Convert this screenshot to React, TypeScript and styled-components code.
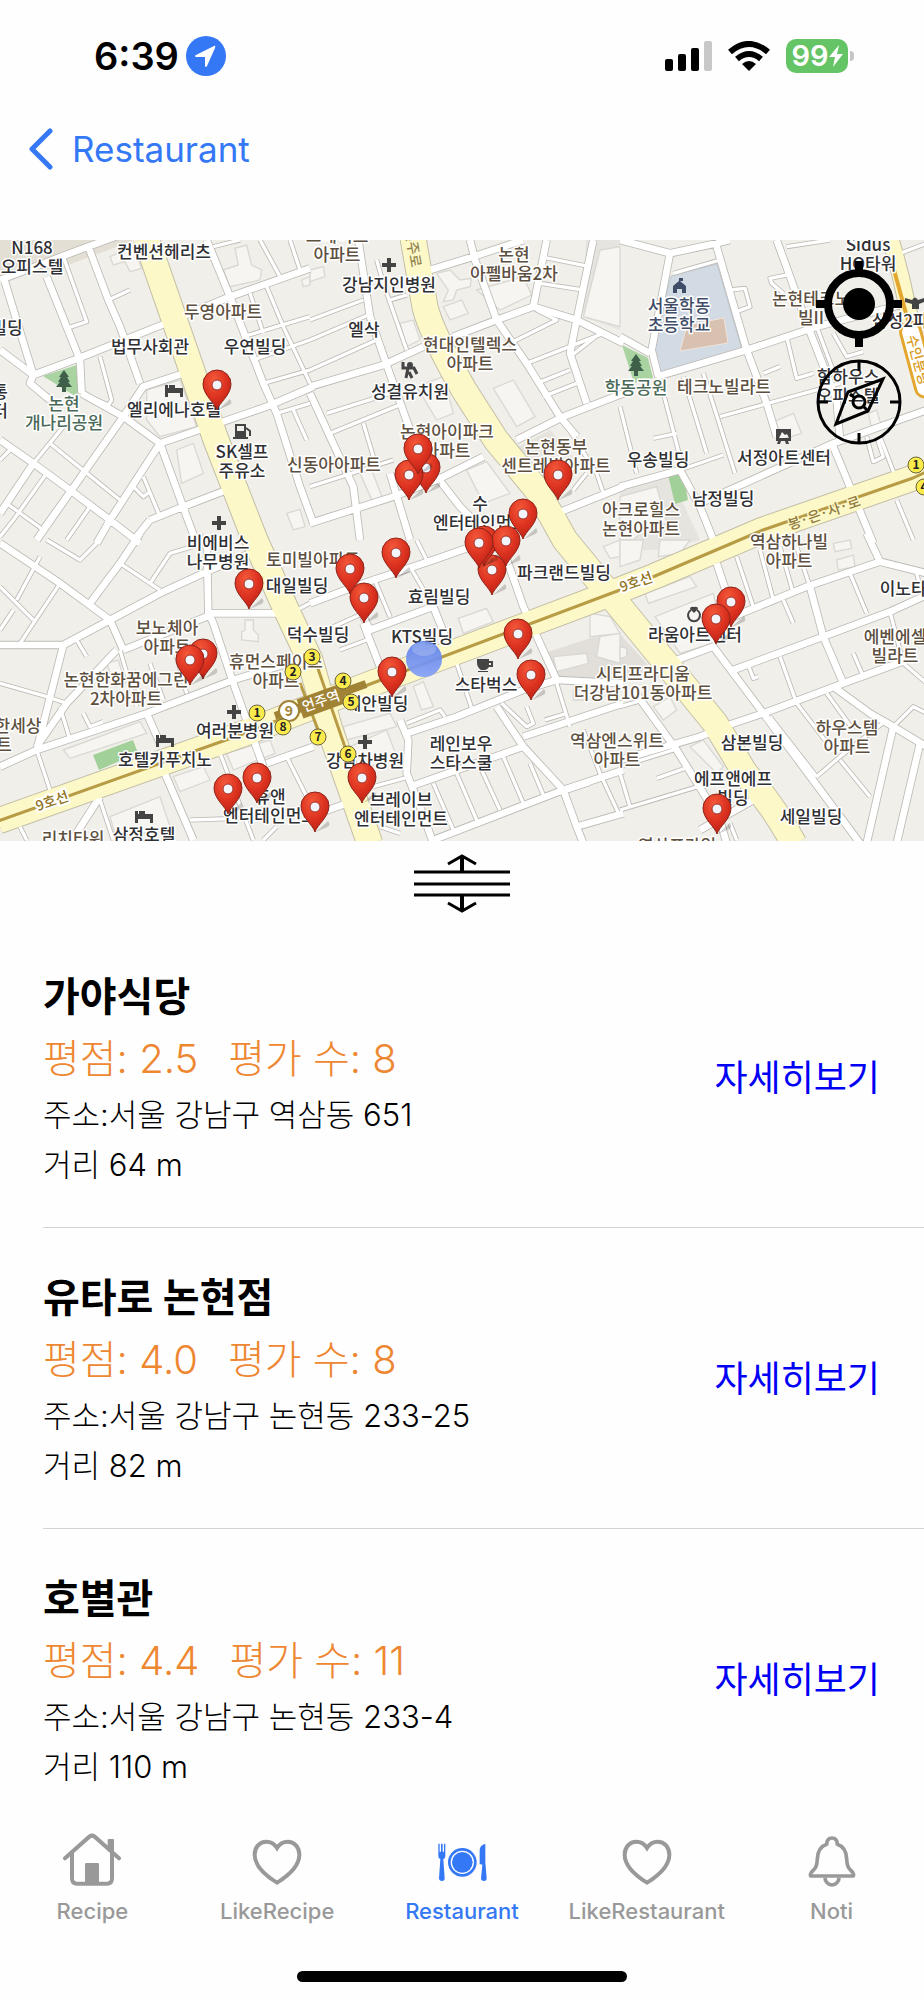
import React from "react";
import styled, { createGlobalStyle } from "styled-components";

const BLUE = "#3478f6";
const GREY = "#999999";

const GlobalStyle = createGlobalStyle`
  *, *::before, *::after { box-sizing: border-box; }
  body {
    margin: 0;
    background: #fefefe;
    color: #000;
    font-family: Inter, "Noto Sans CJK KR", sans-serif;
  }
  button { font: inherit; color: inherit; background: none; border: 0; padding: 0; cursor: pointer; }
  svg { display: block; }
`;

const Screen = styled.div`
  display: flex;
  flex-direction: column;
  min-height: 100vh;
`;

const StatusBar = styled.div`
  display: flex;
  align-items: center;
  justify-content: space-between;
  height: 112px;
  padding: 0 70px 0 94px;
`;

const StatusGroup = styled.div<{ $gap: number }>`
  display: flex;
  align-items: center;
  gap: ${(p) => p.$gap}px;
`;

const Clock = styled.time`
  font-size: 38px;
  font-weight: 600;
  line-height: 40px;
`;

const Battery = styled.div`
  display: flex;
  align-items: center;
  gap: 2px;
`;

const BatteryBody = styled.div`
  display: flex;
  align-items: center;
  justify-content: center;
  width: 62px;
  height: 34px;
  border-radius: 10px;
  background: #65c466;
  color: #fff;
  font-size: 29px;
  font-weight: 600;
  line-height: 34px;
`;

const BatteryNub = styled.div`
  width: 4px;
  height: 10px;
  border-radius: 0 4px 4px 0;
  background: #c4c4c4;
`;

const NavBar = styled.header`
  display: flex;
  align-items: flex-start;
  height: 128px;
  padding: 15px 28px;
`;

const BackButton = styled.button`
  display: flex;
  align-items: center;
  gap: 18px;
  height: 44px;
  color: ${BLUE};
  font-size: 35px;
  line-height: 44px;
`;

const MapPanel = styled.section`
  position: relative;
  overflow: hidden;
`;

const MapSvg = styled.svg`
  width: 100%;
  height: auto;
  font-family: "Noto Sans CJK KR", sans-serif;
`;

const MapControls = styled.div`
  position: absolute;
  top: 21px;
  right: 22px;
  display: flex;
  flex-direction: column;
  gap: 12px;
`;

const DragHandle = styled.button`
  display: flex;
  justify-content: center;
  align-items: center;
  width: 100%;
  height: 86px;
`;

const List = styled.ul`
  flex: 1;
  margin: 0;
  padding: 0 0 0 43px;
  list-style: none;
`;

const Row = styled.li`
  display: flex;
  align-items: center;
  justify-content: space-between;
  padding: 39px 44px 37px 0;
  & + & { border-top: 1px solid #d4d4d6; }
`;

const Title = styled.h2`
  margin: 0;
  font-size: 40px;
  font-weight: 700;
  line-height: 62px;
`;

const Rating = styled.p`
  display: flex;
  gap: 30px;
  margin: 0;
  color: #ee8732;
  font-size: 40px;
  font-weight: 300;
  line-height: 62px;
`;

const Detail = styled.p`
  margin: 0;
  font-size: 31px;
  font-weight: 300;
  line-height: 50px;
`;

const MoreLink = styled.a`
  color: #0000f5;
  font-size: 36px;
  line-height: 48px;
  text-decoration: none;
`;

const TabBar = styled.nav`
  display: grid;
  grid-template-columns: repeat(5, 1fr);
  height: 142px;
`;

const Tab = styled.a<{ $active?: boolean }>`
  display: flex;
  flex-direction: column;
  align-items: center;
  gap: 7px;
  color: ${(p) => (p.$active ? BLUE : GREY)};
  font-size: 22px;
  font-weight: 500;
  line-height: 30px;
  text-decoration: none;
`;

const HomeArea = styled.div`
  display: flex;
  justify-content: center;
  height: 29px;
`;

const HomeIndicator = styled.div`
  width: 330px;
  height: 11px;
  border-radius: 6px;
  background: #000;
`;

/* ---- map data ---- */

/* Streets are kept per tile; inside a tile three units make one map unit. */
type Tile = { x: number; y: number; wide: string; narrow: string; blocks: string };

const tiles: Tile[] = [
  {
    x: 0,
    y: 0,
    wide:
      "M0 120L210 40L400-30M10 110L100 405M140 110L240 360L245 460M265 20L325 180L360 260L420 430M100 405L235 355L485 255L690 170L930 85M620 0L690 170L790 430L830 520L900 740L940 850M0 330L100 405L90 430L150 480M245 460L370 530L480 610M550 400L430 440L370 530L250 700L110 900M480 610L800 500L940 440M480 610L330 840L290 910M480 610L560 830L590 910M0 600L100 670L210 750L330 840L420 910M100 670L0 820M450 840L550 800L680 750M450 840L410 890",
    narrow:
      "M190 50L260 245L200 265M325 180L390 150M640 20L720 0M750 160L790 280M780 0L840 110M870 0L900 90M800 140L850 260L930 430M730 290L930 230M760 360L930 300M790 430L930 390M300 350L335 480L325 495L270 470M190 560L100 670M150 610L360 780M140 700L40 840L0 890M30 630L0 660M210 750L130 860M270 800L200 900M20 790L130 870M430 710L480 830M400 740L430 770L450 755M830 520L930 490M880 510L920 600",
    blocks:
      "M330 50L400 20L425 85L390 95L375 65L340 75ZM670 90L715 75L705 25L740 15L755 75L785 90L780 120L690 140ZM440 450L540 420L590 560L480 590L440 540ZM530 630L580 610L610 700L545 730ZM860 820L900 808L915 860L880 870ZM905 120L930 110V135L910 140Z",
  },
  {
    x: 930,
    y: 0,
    wide:
      "M145 0L180 230L230 375L300 570M0 440L220 375L340 320M0 460L60 590L130 740L150 900M0 850L250 770L380 720L520 650M240 700L300 900M360 90L490 50L640 0M480 0L495 60L560 240L650 370L750 530L800 590M430 290L560 240L670 200L800 240L940 310M710 0L670 200M850 0L800 240L780 340L830 490M620 600L760 530L940 460M740 820L940 740M380 710L450 800L510 860",
    narrow:
      "M200 60L220 130L290 330M0 240L160 180M0 300L175 225M0 390L200 300M50 520L240 460M60 580L280 490M160 550L190 650M0 740L250 660M240 180L290 165M690 50L840 80M690 130L820 150M680 210L740 240L600 310M650 370L880 280M680 430L780 390M700 470L800 430M870 280L780 350M760 540L860 700L880 760M790 750L830 700",
    blocks:
      "M380 100L420 90L450 120L485 115L480 140L440 150L430 180L400 185L415 150ZM400 200L455 180L475 220L420 240ZM270 250L310 240L330 300L290 320ZM500 150L640 110L665 165L570 210ZM550 445L610 420L675 530L620 560ZM320 440L400 410L430 520L380 540ZM470 690L530 665L600 760L520 790ZM150 700L185 690L220 780L190 790ZM870 30L930 20V260L820 230L840 150ZM0 90L40 80L45 110L0 125Z",
  },
  {
    x: 1860,
    y: 0,
    wide:
      "M0 0L150 40L290 10L330 0M150 40L95 330L115 410M290 20L380 330L440 490L470 590M110 410L380 330L590 260L860 190M0 740L180 690M180 690L240 800L280 900M240 790L640 610L920 510M640 620L760 910M470 0L510 110L560 250L650 480L660 600M0 290L90 340",
    narrow:
      "M160 100L300 60M180 690L310 645M500 20L630 0M490 160L455 130L450 115L500 105M330 150L375 145L390 200L350 215M300 530L660 430M430 400L480 380M500 290L530 415L580 400M190 410L260 640M250 400L345 700M120 420L190 690M170 580L100 595M0 500L50 700M740 590L760 665L790 650L770 590M590 260L650 420M640 280L680 350L730 335M720 820L760 900M830 780L880 900M840 40L920 10M780 590L830 720",
    blocks:
      "M450 550L520 520L545 580L480 600ZM0 770L110 740L140 850L70 870L40 900H0ZM200 120L280 90L285 110L200 140ZM745 520L770 510L785 560L755 565Z",
  },
  {
    x: 0,
    y: 900,
    wide:
      "M0 10L180 130L330 240L370 330M270 190L360 70L420-20M0 315L190 315L330 240L480 160L620 95L750 40M620-20L625 220L640 250L700 430L790 680M625 220L830 220M190 315L110 630M370 330L620 230M350 330L200 490L110 620M0 680L110 630L440 520L700 420L930 350M490 690L580 900M300 770L210 910M800 670L940 620M440 520L480 610",
    narrow:
      "M180 130L60 310M120 50L50 180M0 140L100 240M140 0L240 60L300 0M40 210L0 270M850 230L930 190M360 70L480 150M450 130L510 40L610 10M230 300L260 350M0 430L140 470L200 490M110 630L150 750M400 390L420 470M360 330L410 500M450 370L490 480M530 350L560 460M180 500L210 600M250 520L270 560L310 545M660 640L760 900M860 650L930 790M60 860L80 900M300 780L340 900M570 840L720 835M830 860L790 900",
    blocks:
      "M190 630L420 545L440 580L210 655ZM735 240H760V270L775 285V305L725 300V275L735 270ZM330 830L480 770L510 860L350 900ZM520 710L610 680L630 720L540 755ZM680 640L810 600L825 640L700 690ZM320 370L355 360L375 430L345 440Z",
  },
  {
    x: 930,
    y: 900,
    wide:
      "M0 190L160 130L370 60L570-10M160 230L180 270L370 200L410 300M160 250L210 380M570 0L640 200L740 420L940 430M290 580L440 530L640 450L740 420M270 540L295 600L290 700L330 800L370 910M560 500L640 620L760 750L800 860L820 910M640 590L940 490M300 740L640 620M370 900L760 750L940 690M800 860L940 820M0 830L110 790",
    narrow:
      "M190 110L240 230M70 260L160 220M90 330L170 300M300 80L370 200M320 0L350 60M440 370L490 520M290 550L390 510L405 530M575 490L650 560L670 550L650 500M705 540L770 520M740 430L780 560M190 740L300 710M370 730L430 870M440 700L500 840M510 680L570 810M580 650L640 790M660 670L700 765M820 570L870 700L930 830M750 760L840 730M210 860L270 880",
    blocks:
      "M445 235L530 205L550 245L460 280ZM730 350L830 340L835 370L740 395ZM870 290L930 280V370L860 350ZM840 220L900 230L930 280L840 290ZM310 440L340 425L370 500L335 510ZM100 560L240 520L260 560L110 600ZM120 620L230 570L260 650L150 690ZM880 20L930 0V50L900 55ZM790 450H830V480H790Z",
  },
  {
    x: 1860,
    y: 900,
    wide:
      "M170 360L280 320L430 520L720 910M340 230L560 140L780 65L920 100M290 70L320 160M740-20L780 65M570 140L610 290L670 430M340 390L610 290L810 215L920 165M240 590L340 550L430 520L670 430L860 360M640 440L750 520L820 560L920 620M820 560L740 910M900 610L830 910M40 450L170 630L300 840L320 910M0 660L240 590M240 870L400 780",
    narrow:
      "M350 50L400 200M420 30L460 180M480 20L520 160M530 20L570 140M690 100L740 220M490 180L520 250M810 215L850 370L920 430M480 350L530 490M700 340L730 410M385 375L400 415L415 410M530 490L630 620M450 530L590 710M620 460L700 570M590 710L660 650L800 540M660 660L750 770M820 560L880 500L920 520M0 500L70 480M0 810L300 720M110 715L195 685M160 630L0 680M330 850L350 900M0 700L30 800M890 100L900 140",
    blocks:
      "M75 160L210 110L230 140L85 190ZM105 230L280 160L310 300L180 340ZM650 60L700 45L705 80L655 90ZM640 10L690 0L695 25L645 35ZM0 0H70L60 60L0 80ZM120 0H210L180 40L115 50ZM210 620L250 600L310 680L290 700ZM100 500L150 470L170 510L130 540ZM0 320L20 325V350L0 355Z",
  },
];

const DARK = "#2f3033";
const BROWN = "#5d5040";
const GREEN = "#4a6a58";
const SLATE = "#3f4d68";

type Place = { x: number; y: number; lines: string[]; color?: string };

const places: Place[] = [
  { x: 32, y: 8, lines: ["N168", "오피스텔"] },
  { x: 164, y: 12, lines: ["컨벤션헤리츠"] },
  { x: 223, y: 72, lines: ["두영아파트"], color: BROWN },
  { x: 150, y: 107, lines: ["법무사회관"] },
  { x: 255, y: 107, lines: ["우연빌딩"] },
  { x: 7, y: 88, lines: ["빌딩"] },
  { x: 0, y: 152, lines: ["통", "터"] },
  { x: 64, y: 164, lines: ["논현", "개나리공원"], color: GREEN },
  { x: 174, y: 170, lines: ["엘리에나호텔"] },
  { x: 242, y: 212, lines: ["SK셀프", "주유소"] },
  { x: 334, y: 225, lines: ["신동아아파트"], color: BROWN },
  { x: 218, y: 303, lines: ["비에비스", "나무병원"] },
  { x: 337, y: -4, lines: ["크레이트", "아파트"], color: BROWN },
  { x: 389, y: 45, lines: ["강남지인병원"] },
  { x: 364, y: 90, lines: ["엘삭"] },
  { x: 514, y: 15, lines: ["논현", "아펠바움2차"], color: BROWN },
  { x: 470, y: 105, lines: ["현대인텔렉스", "아파트"], color: BROWN },
  { x: 410, y: 152, lines: ["성결유치원"] },
  { x: 447, y: 192, lines: ["논현아이파크", "아파트"], color: BROWN },
  { x: 556, y: 207, lines: ["논현동부", "센트레빌아파트"], color: BROWN },
  { x: 480, y: 264, lines: ["수", "엔터테인먼트"] },
  { x: 641, y: 270, lines: ["아크로힐스", "논현아파트"], color: BROWN },
  { x: 636, y: 148, lines: ["학동공원"], color: GREEN },
  { x: 868, y: 5, lines: ["Sidus", "HQ타워"] },
  { x: 811, y: 59, lines: ["논현테크노", "빌II"], color: BROWN },
  { x: 908, y: 81, lines: ["삼성2파크"] },
  { x: 679, y: 66, lines: ["서울학동", "초등학교"], color: SLATE },
  { x: 724, y: 147, lines: ["테크노빌라트"], color: BROWN },
  { x: 848, y: 137, lines: ["함하우스", "오피스텔"] },
  { x: 658, y: 220, lines: ["우송빌딩"] },
  { x: 784, y: 218, lines: ["서정아트센터"] },
  { x: 723, y: 259, lines: ["남정빌딩"] },
  { x: 789, y: 302, lines: ["역삼하나빌", "아파트"], color: BROWN },
  { x: 313, y: 320, lines: ["토미빌아파트"], color: BROWN },
  { x: 297, y: 346, lines: ["대일빌딩"] },
  { x: 167, y: 388, lines: ["보노체아", "아파트"], color: BROWN },
  { x: 126, y: 440, lines: ["논현한화꿈에그린", "2차아파트"], color: BROWN },
  { x: 276, y: 422, lines: ["휴먼스페이스", "아파트"], color: BROWN },
  { x: 318, y: 395, lines: ["덕수빌딩"] },
  { x: 18, y: 486, lines: ["한세상"], color: BROWN },
  { x: 4, y: 505, lines: ["트"], color: BROWN },
  { x: 235, y: 491, lines: ["여러분병원"] },
  { x: 165, y: 520, lines: ["호텔카푸치노"] },
  { x: 73, y: 599, lines: ["리치타워"], color: BROWN },
  { x: 144, y: 595, lines: ["삼정호텔"] },
  { x: 270, y: 557, lines: ["휴앤", "엔터테인먼트"] },
  { x: 439, y: 357, lines: ["효림빌딩"] },
  { x: 422, y: 397, lines: ["KTS빌딩"] },
  { x: 486, y: 445, lines: ["스타벅스"] },
  { x: 564, y: 333, lines: ["파크랜드빌딩"] },
  { x: 377, y: 464, lines: ["제안빌딩"] },
  { x: 643, y: 434, lines: ["시티프라디움", "더강남101동아파트"], color: BROWN },
  { x: 617, y: 501, lines: ["역삼엔스위트", "아파트"], color: BROWN },
  { x: 461, y: 504, lines: ["레인보우", "스타스쿨"] },
  { x: 365, y: 521, lines: ["강남차병원"] },
  { x: 401, y: 560, lines: ["브레이브", "엔터테인먼트"] },
  { x: 695, y: 395, lines: ["라움아트센터"] },
  { x: 911, y: 349, lines: ["이노타워"] },
  { x: 895, y: 397, lines: ["에벤에셀", "빌라트"], color: BROWN },
  { x: 847, y: 488, lines: ["하우스템", "아파트"], color: BROWN },
  { x: 752, y: 503, lines: ["삼본빌딩"] },
  { x: 733, y: 539, lines: ["에프앤에프", "빌딩"] },
  { x: 811, y: 577, lines: ["세일빌딩"] },
  { x: 677, y: 606, lines: ["역삼프라임"], color: BROWN },
];

const exits: [number, number, string][] = [
  [257, 473, "1"],
  [283, 487, "8"],
  [293, 432, "2"],
  [312, 417, "3"],
  [343, 441, "4"],
  [351, 462, "5"],
  [318, 497, "7"],
  [348, 514, "6"],
  [916, 225, "1"],
  [924, 247, "4"],
];

const pins: [number, number][] = [
  [217, 144],
  [426, 227],
  [409, 234],
  [418, 208],
  [558, 234],
  [523, 273],
  [492, 329],
  [484, 300],
  [506, 300],
  [479, 302],
  [396, 312],
  [350, 328],
  [364, 357],
  [518, 393],
  [531, 434],
  [392, 431],
  [362, 537],
  [315, 566],
  [249, 343],
  [203, 413],
  [190, 419],
  [228, 548],
  [257, 537],
  [731, 361],
  [716, 378],
  [717, 568],
];

const TILE_SCALE = 1 / 3;
const tileTransform = (t: Tile) => `scale(${TILE_SCALE}) translate(${t.x} ${t.y})`;

const EONJU = "M146-2L216 200L255 300L285 367L310 420L330 490L370 604";
const NONHYEON =
  "M413-2L425 67Q431 92 464 150L496 200L537 250L565 300L620 367L715 483L745 533Q775 568 794 604";
const BONGEUNSA = "M-2 581L240 495L365 446L620 350L655 336L763 290L913 238L926 232";
const SUIN = "M890-2Q900 30 906 60L926 150";

const Plus = ({ x, y }: { x: number; y: number }) => (
  <path d={`M${x - 7} ${y}h14M${x} ${y - 7}v14`} stroke="#444" strokeWidth="4" />
);
const Bed = ({ x, y }: { x: number; y: number }) => (
  <path
    transform={`translate(${x} ${y})`}
    d="M-9-6h3v3h15v9h-3v-4h-12v4h-3zM-5-6h6v3h-6z"
    fill="#444"
  />
);
const Tree = ({ x, y }: { x: number; y: number }) => (
  <path
    transform={`translate(${x} ${y})`}
    d="M0-11L5-4H3L6 1H4L8 6H2V11H-2V6H-8L-4 1H-6L-3-4H-5Z"
    fill="#3f5f4b"
  />
);

const MapView = () => (
  <MapSvg viewBox="0 0 924 601" role="img" aria-label="지도">
    <defs>
      <radialGradient id="pinFill" cx="0.4" cy="0.25" r="0.8">
        <stop offset="0" stopColor="#f4593a" />
        <stop offset="0.55" stopColor="#dc3220" />
        <stop offset="1" stopColor="#b81f14" />
      </radialGradient>
      <linearGradient id="dotFill" x1="0" y1="0" x2="0" y2="1">
        <stop offset="0" stopColor="#5b7fe8" />
        <stop offset="1" stopColor="#84a0fa" />
      </linearGradient>
      <g id="pin">
        <path d="M1 25L13 14Q17 19 10 21Z" fill="#000" opacity="0.18" />
        <path
          d="M0 25C-2 18-14 10-14-1A14 14 0 0 1 14-1C14 10 2 18 0 25Z"
          fill="url(#pinFill)"
          stroke="#8c2419"
          strokeWidth="1"
        />
        <circle r="5" fill="#f3f5fa" stroke="#a03028" strokeWidth="1" />
      </g>
    </defs>

    <rect width="924" height="601" fill="#f1efea" />
    <path d="M0 0H135L60 28L0 36Z" fill="#e3dfd5" />
    <path d="M586 0H620V90L583 77Z" fill="#e6e4e0" />
    <path d="M620 250L670 235L700 300L660 310H620Z" fill="#e6e4df" />
    <path d="M548 412L600 395L618 392L660 438H556Z" fill="#e2dfda" />
    <path d="M512 210L550 190L580 225L560 255Z" fill="#e6e3dd" />

    {tiles.map((t) => (
      <path key={`${t.x}-${t.y}`} transform={tileTransform(t)} d={t.blocks} fill="#f6f5f2" stroke="#dad8d2" strokeWidth="4" />
    ))}

    <path d="M671 36L717 24L742 110L663 136L652 112Z" fill="#d2dae4" stroke="#c0c9d4" />
    <path d="M687 85L724 78L728 103L680 111Z" fill="#d8c1b0" stroke="#f0e4da" />
    <path d="M43 136L77 125L82 153L75 156Z" fill="#a9d3a1" />
    <path d="M622 105L648 118L653 138L634 143Z" fill="#a9d3a1" />
    <path d="M668 235L683 233L688 260L675 264Z" fill="#a1d198" />
    <path d="M93 515L133 500L138 513L99 530Z" fill="#a1d198" />

    <g fill="none" strokeLinejoin="round">
      {tiles.map((t) => (
        <g key={`${t.x}-${t.y}`} transform={tileTransform(t)} stroke="#bdbab5">
          <path d={t.narrow} strokeWidth="15" />
          <path d={t.wide} strokeWidth="25" />
        </g>
      ))}
      <g stroke="#c3bfa8" strokeWidth="27">
        <path d={EONJU} />
        <path d={NONHYEON} />
        <path d={BONGEUNSA} />
        <path d={SUIN} strokeWidth="18" />
      </g>
      {tiles.map((t) => (
        <g key={`${t.x}-${t.y}`} transform={tileTransform(t)} stroke="#fff">
          <path d={t.narrow} strokeWidth="10" />
          <path d={t.wide} strokeWidth="20" />
        </g>
      ))}
      <g stroke="#fdf8c8" strokeWidth="25">
        <path d={EONJU} />
        <path d={NONHYEON} />
        <path d={BONGEUNSA} />
        <path d={SUIN} strokeWidth="16" />
      </g>
      <path d={BONGEUNSA} stroke="#b79b45" strokeWidth="3" />
      <path d="M894 30L912 95" stroke="#e3a72f" strokeWidth="4" />
      <path d="M300 443L322 500M315 420L346 510" stroke="#b79b45" strokeWidth="3" />
      <path d="M275 476L366 444" stroke="#a08335" strokeWidth="8" />
      <path d="M300 469L344 453" stroke="#a08335" strokeWidth="20" />
    </g>

    <g fontWeight="500">
      <rect x="-30" y="-10" width="76" height="20" rx="9" transform="translate(916 112) rotate(75)" fill="#fff" stroke="#e3a72f" strokeWidth="3" />
      <g textAnchor="middle" fontSize="14">
        <text transform="translate(918 120) rotate(75)" y="5" fill="#d99a20">수인분당</text>
        <text transform="translate(824 273) rotate(-19)" y="5" fill="#8f7a40" stroke="#fdf8c8" strokeWidth="3" paintOrder="stroke">봉·은·사·로</text>
        <text transform="translate(52 561) rotate(-19)" y="5" fill="#8f7220" stroke="#fff" strokeWidth="4" paintOrder="stroke">9호선</text>
        <text transform="translate(636 342) rotate(-19)" y="5" fill="#8f7220" stroke="#fff" strokeWidth="4" paintOrder="stroke">9호선</text>
        <text transform="translate(413 8) rotate(80)" y="5" fill="#8f8450">언주로</text>
        <text transform="translate(321 461) rotate(-19)" y="5" fill="#fff">언주역</text>
      </g>
    </g>

    <circle cx="289" cy="471" r="10" fill="#fff" stroke="#a08335" strokeWidth="2" />
    <text x="289" y="476" fontSize="14" fontWeight="700" textAnchor="middle" fill="#a08335">9</text>

    <Tree x={64} y={141} />
    <Tree x={636} y={125} />
    <Bed x={174} y={151} />
    <Bed x={165} y={501} />
    <Bed x={144} y={577} />
    <Plus x={219} y={283} />
    <Plus x={389} y={25} />
    <Plus x={234} y={472} />
    <Plus x={365} y={502} />
    <g fill="#444">
      <path d="M235 184h11v13h2v2h-15v-2h2zM237 186v5h7v-5z" fillRule="evenodd" />
      <path d="M246 188l4 3v5" fill="none" stroke="#444" strokeWidth="2" />
      <circle cx="410" cy="125" r="3" />
      <path d="M403 122v6h5l-2 10M408 128h6l3 6M409 132l3 6" fill="none" stroke="#444" strokeWidth="3" />
      <path d="M776 189h15v12h-3l1 3h-3l-1-3h-4l-1 3h-3l1-3h-2zM779 198h10l-2-4-2 1-3-3z" fillRule="evenodd" />
      <path d="M477 419h12v2h4v6h-4q-2 3-4 3h-4q-4-3-4-7zM489 423v2h2v-2zM478 431h10v1h-10z" />
      <path d="M691 370a6 6 0 1 0 6 0" fill="none" stroke="#444" strokeWidth="2" />
      <path d="M694 373l-4-4q0-3 4-2q4-1 4 2z" />
      <path d="M905 58l7 2q3-5 6 0l6-2v4l-5 2v5h-7v-5l-7-2z" />
    </g>
    <path d="M673 53V46L679 41V38h4v3h-3l6 5v7h-4v-4h-5v4z" fill={SLATE} />

    <g fontSize="17" fontWeight="500" textAnchor="middle" stroke="#fff" strokeWidth="3" strokeLinejoin="round" paintOrder="stroke">
      {places.map((p) =>
        p.lines.map((line, i) => (
          <text key={`${p.x}-${p.y}-${i}`} x={p.x} y={p.y + 6 + i * 19} fill={p.color ?? DARK}>
            {line}
          </text>
        ))
      )}
    </g>

    {exits.map(([x, y, n]) => (
      <g key={`${x}-${y}`}>
        <circle cx={x} cy={y} r="8" fill="#fbea4c" stroke="#6b6440" strokeWidth="1" />
        <text x={x} y={y + 4} fontSize="12" fontWeight="700" textAnchor="middle" fill="#222">
          {n}
        </text>
      </g>
    ))}

    {pins.map(([x, y]) => (
      <use key={`${x}-${y}`} href="#pin" x={x} y={y + 1} />
    ))}

    <circle cx="424" cy="419" r="18" fill="url(#dotFill)" opacity="0.92" />
    <ellipse cx="424" cy="409" rx="12" ry="7" fill="#fff" opacity="0.2" />
  </MapSvg>
);

/* ---- icons ---- */

const LocateIcon = () => (
  <svg width="86" height="86" viewBox="0 0 86 86" aria-hidden="true">
    <circle cx="43" cy="43" r="31" fill="none" stroke="#000" strokeWidth="8" />
    <circle cx="43" cy="43" r="16" />
    <path d="M43 0V12M43 74V86M0 43H12M74 43H86" stroke="#000" strokeWidth="8" />
  </svg>
);

const CompassIcon = () => (
  <svg width="86" height="86" viewBox="0 0 86 86" fill="none" stroke="#000" strokeWidth="3" aria-hidden="true">
    <circle cx="43" cy="43" r="41" />
    <path d="M43 2V12M43 74V84M2 43H12M74 43H84" />
    <path d="M67 20L32 33L20 65L52 52Z" />
    <circle cx="43" cy="43" r="6" />
    <path d="M34 35L39 39M47 47L52 52" />
  </svg>
);

const HomeIcon = () => (
  <svg width="64" height="60" viewBox="0 0 192 180" fill="none" stroke="currentColor" strokeWidth="12" strokeLinecap="round" aria-hidden="true">
    <path d="M15 88L88 23Q96 17 104 23L177 88" />
    <path d="M36 72V148Q36 164 50 164H142Q156 164 156 148V72" />
    <path d="M143 60V33Q143 30 147 30H159Q162 30 162 33V78ZM75 106Q75 102 79 102H113Q117 102 117 106V162H75Z" fill="currentColor" stroke="none" />
  </svg>
);

const HeartIcon = () => (
  <svg width="64" height="60" viewBox="0 0 192 180" fill="none" stroke="currentColor" strokeWidth="12" aria-hidden="true">
    <path d="M96 57C88 44 78 38 64 38C44 38 29 54 29 77C29 106 56 136 96 161C136 136 163 106 163 77C163 54 148 38 128 38C114 38 104 44 96 57Z" />
  </svg>
);

const DiningIcon = () => (
  <svg width="64" height="60" viewBox="0 0 192 180" fill="currentColor" aria-hidden="true">
    <circle cx="97" cy="100" r="31" />
    <circle cx="97" cy="100" r="39" fill="none" stroke="currentColor" strokeWidth="8" />
    <path d="M25 44H29V68H33V44H38V68H42V44H46V82Q46 88 40 91L44 148Q44 156 36 156Q27 156 27 148L31 91Q25 88 25 82Z" />
    <path d="M149 105V62Q150 48 166 44V100L170 148Q170 156 162 156Q153 156 153 148L157 107Z" />
  </svg>
);

const BellIcon = () => (
  <svg width="64" height="60" viewBox="0 0 192 180" fill="none" stroke="currentColor" strokeWidth="11" strokeLinejoin="round" aria-hidden="true">
    <path d="M80 46Q81 27 96 27Q111 27 112 46C130 52 139 66 140 90C141 114 146 118 158 130Q164 141 157 141H35Q28 141 34 130C46 118 51 114 52 90C53 66 62 52 80 46Z" />
    <path d="M75 146A21 22 0 0 0 117 146" />
  </svg>
);

const restaurants = [
  { name: "가야식당", score: "2.5", reviews: 8, address: "서울 강남구 역삼동 651", distance: 64 },
  { name: "유타로 논현점", score: "4.0", reviews: 8, address: "서울 강남구 논현동 233-25", distance: 82 },
  { name: "호별관", score: "4.4", reviews: 11, address: "서울 강남구 논현동 233-4", distance: 110 },
];

const tabs = [
  { label: "Recipe", Icon: HomeIcon },
  { label: "LikeRecipe", Icon: HeartIcon },
  { label: "Restaurant", Icon: DiningIcon, active: true },
  { label: "LikeRestaurant", Icon: HeartIcon },
  { label: "Noti", Icon: BellIcon },
];

export default function App() {
  return (
    <>
      <GlobalStyle />
      <Screen>
        <StatusBar>
          <StatusGroup $gap={7}>
            <Clock>6:39</Clock>
            <svg width="40" height="40" viewBox="0 0 40 40" aria-hidden="true">
              <circle cx="20" cy="20" r="20" fill={BLUE} />
              <path d="M29 12L21 30Q20 32 19 30V21H10Q8 20 10 19L28 10Q30 9 29 12Z" fill="#fff" />
            </svg>
          </StatusGroup>
          <StatusGroup $gap={16}>
            <svg width="47" height="30" viewBox="0 0 47 30" aria-hidden="true">
              <rect x="0" y="18" width="8" height="12" rx="2" />
              <rect x="13" y="13" width="8" height="17" rx="2" />
              <rect x="26" y="7" width="8" height="23" rx="2" />
              <rect x="39" y="0" width="8" height="30" rx="2" fill="#c8c8c8" />
            </svg>
            <svg width="42" height="30" viewBox="0 0 42 30" fill="none" stroke="#000" aria-hidden="true">
              <path d="M2 11Q21-5 40 11" strokeWidth="6" />
              <path d="M9 18Q21 8 33 18" strokeWidth="6" />
              <path d="M21 30L14 23Q21 17 28 23Z" fill="#000" stroke="none" />
            </svg>
            <Battery>
              <BatteryBody>
                99
                <svg width="14" height="22" viewBox="0 0 14 22" fill="#fff" aria-hidden="true">
                  <path d="M10 0L0 12H6L4 22L14 9H8Z" />
                </svg>
              </BatteryBody>
              <BatteryNub />
            </Battery>
          </StatusGroup>
        </StatusBar>

        <NavBar>
          <BackButton type="button">
            <svg width="26" height="42" viewBox="0 0 26 42" fill="none" stroke="currentColor" strokeWidth="5" strokeLinecap="round" strokeLinejoin="round" aria-hidden="true">
              <path d="M22 3L4 21L22 39" />
            </svg>
            Restaurant
          </BackButton>
        </NavBar>

        <MapPanel>
          <MapView />
          <MapControls>
            <button type="button" aria-label="현재 위치">
              <LocateIcon />
            </button>
            <button type="button" aria-label="나침반">
              <CompassIcon />
            </button>
          </MapControls>
        </MapPanel>

        <DragHandle type="button" aria-label="크기 조절">
          <svg width="96" height="62" viewBox="0 0 96 62" fill="none" stroke="#000" strokeWidth="3" aria-hidden="true">
            <path d="M0 19H96M0 31H96M0 42H96" />
            <path d="M48 3V19M48 42V58" strokeWidth="4" />
            <path d="M34 11L48 3L62 11M34 50L48 58L62 50" />
          </svg>
        </DragHandle>

        <List>
          {restaurants.map((r) => (
            <Row key={r.name}>
              <div>
                <Title>{r.name}</Title>
                <Rating>
                  <span>평점: {r.score}</span>
                  <span>평가 수: {r.reviews}</span>
                </Rating>
                <Detail>주소:{r.address}</Detail>
                <Detail>거리 {r.distance} m</Detail>
              </div>
              <MoreLink href="#detail">자세히보기</MoreLink>
            </Row>
          ))}
        </List>

        <TabBar>
          {tabs.map(({ label, Icon, active }) => (
            <Tab key={label} href={`#${label}`} $active={active}>
              <Icon />
              {label}
            </Tab>
          ))}
        </TabBar>
        <HomeArea>
          <HomeIndicator />
        </HomeArea>
      </Screen>
    </>
  );
}
